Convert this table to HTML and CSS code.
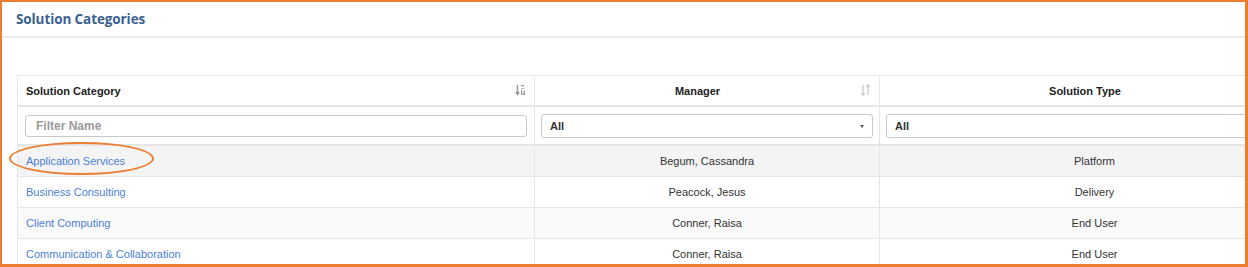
FILE: index.html
```html
<!DOCTYPE html>
<html>
<head>
<meta charset="utf-8">
<link rel="stylesheet" href="styles.css">
</head>
<body>
<div class="frame">
  <div class="panel-head"><span class="title">Solution Categories</span></div>
  <div class="panel-body">
    <table class="grid">
      <colgroup>
        <col class="c1"><col class="c2"><col class="c3">
      </colgroup>
      <thead>
        <tr class="hdr">
          <th class="left"><span>Solution Category</span>
            <svg class="sort" width="11" height="12" viewBox="0 0 11 12"><path d="M2.5 1v9M0.8 8l1.7 2.5L4.2 8" stroke="#9a9a9a" stroke-width="1.4" fill="none"/><path d="M6 1h3v1.2H6zM6.5 4h2v1.2h-2zM6 6.5h1.3v4.5H6zM7.7 9.8h2.3V11H7.7zM8.7 6.5H10v3.3H8.7z" fill="#9a9a9a"/></svg>
          </th>
          <th><span>Manager</span>
            <svg class="sort" width="11" height="12" viewBox="0 0 11 12"><path d="M3 1v10M1.3 9l1.7 2.5L4.7 9" stroke="#cfcfcf" stroke-width="1.4" fill="none"/><path d="M8 11V1M6.3 3L8 0.5 9.7 3" stroke="#cfcfcf" stroke-width="1.4" fill="none"/></svg>
          </th>
          <th><span>Solution Type</span></th>
        </tr>
        <tr class="filters">
          <td><div class="input">Filter Name</div></td>
          <td><div class="select">All<span class="caret"></span></div></td>
          <td><div class="select wide">All</div></td>
        </tr>
      </thead>
      <tbody>
        <tr class="alt"><td class="left"><a>Application Services</a></td><td>Begum, Cassandra</td><td>Platform</td></tr>
        <tr><td class="left"><a>Business Consulting</a></td><td>Peacock, Jesus</td><td>Delivery</td></tr>
        <tr class="alt2"><td class="left"><a>Client Computing</a></td><td>Conner, Raisa</td><td>End User</td></tr>
        <tr><td class="left"><a>Communication &amp; Collaboration</a></td><td>Conner, Raisa</td><td>End User</td></tr>
      </tbody>
    </table>
    <div class="ring"></div>
  </div>
</div>
</body>
</html>
```

FILE: styles.css
```css
html, body {
  margin: 0;
  padding: 0;
  background: #ffffff;
}
body {
  font-family: "Liberation Sans", Arial, sans-serif;
  color: #333;
}
.frame {
  box-sizing: border-box;
  width: 1248px;
  height: 267px;
  border: 2px solid #ed7d31;
  border-right-width: 3px;
  border-bottom-width: 3px;
  overflow: hidden;
  position: relative;
}
.panel-head {
  height: 34px;
  border-bottom: 2px solid #ececec;
  display: flex;
  align-items: center;
  padding-left: 14px;
}
.title {
  font-family: "Open Sans", "Liberation Sans", sans-serif;
  font-weight: 700;
  font-size: 13.5px;
  color: #3b5f8e;
  letter-spacing: -0.1px;
}
.panel-body {
  padding: 37px 0 0 15px;
  position: relative;
}
.grid {
  border-collapse: collapse;
  table-layout: fixed;
  width: 1292px;
  font-size: 11px;
}
.c1 { width: 517px; }
.c2 { width: 345px; }
.c3 { width: 430px; }
.grid th, .grid td {
  border: 1px solid #e6e6e6;
  text-align: center;
  padding: 0 8px;
}
.grid tr.hdr th {
  height: 29px;
  font-weight: 700;
  color: #222;
  position: relative;
  border-bottom: 2px solid #e6e6e6;
  font-size: 11px;
  padding: 0 27px 0 8px;
}
.grid tr.hdr th.left { text-align: left; }
.sort {
  position: absolute;
  right: 8px;
  top: 8px;
}
.grid tr.filters td {
  height: 37px;
  padding: 0 6px;
  border-bottom: 2px solid #e6e6e6;
}
.input, .select {
  box-sizing: border-box;
  height: 23px;
  border: 1px solid #c8c8c8;
  border-radius: 3px;
  display: flex;
  align-items: center;
  padding-left: 10px;
  text-align: left;
  position: relative;
}
.input {
  color: #9a9a9a;
  font-size: 12px;
  font-weight: 700;
  margin-left: 1px;
  margin-right: 1px;
  height: 22px;
}
.select {
  font-weight: 700;
  color: #333;
  font-size: 11px;
  height: 24px;
  padding-left: 8px;
}
.caret {
  position: absolute;
  right: 8px;
  top: 10px;
  width: 0;
  height: 0;
  border-left: 2.5px solid transparent;
  border-right: 2.5px solid transparent;
  border-top: 3px solid #555;
}
.grid tbody td {
  height: 30px;
  color: #333;
}
.grid tbody td.left {
  text-align: left;
}
.grid tbody tr.alt td { background: #f4f4f4; }
.grid tbody tr.alt2 td { background: #fafafa; }
.grid a {
  color: #4a7fd6;
  text-decoration: none;
}
.ring {
  position: absolute;
  left: 7px;
  top: 104px;
  width: 145px;
  height: 33px;
  border: 2px solid #ed7d31;
  border-radius: 50%;
  box-sizing: border-box;
}
```
